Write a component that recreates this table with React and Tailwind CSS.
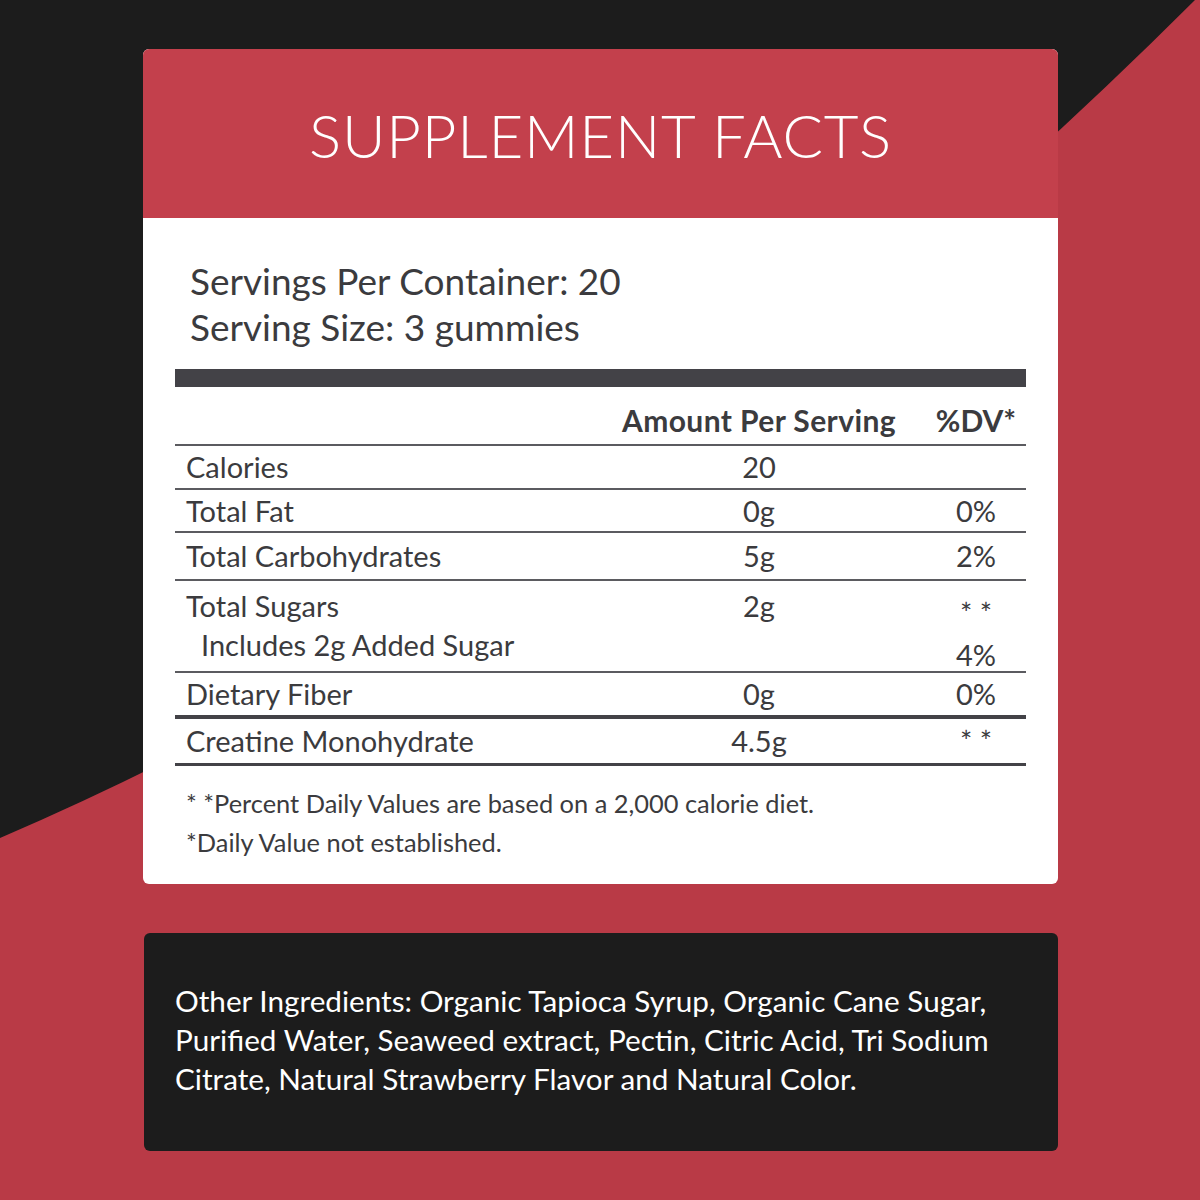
import React from "react";

const rows = [
  { label: "Calories", amt: "20", dv: "", h: "h-[42px]", border: "border-b-2 border-[#5b5b60]" },
  { label: "Total Fat", amt: "0g", dv: "0%", h: "h-[41px]", border: "border-b-2 border-[#5b5b60]" },
  { label: "Total Carbohydrates", amt: "5g", dv: "2%", h: "h-[46px]", border: "border-b-2 border-[#5b5b60]" },
];

export default function App() {
  return (
    <div
      className="relative w-[1200px] h-[1200px] overflow-hidden bg-[#1c1c1c] text-[#3b3b3e]"
      style={{ fontFamily: "Lato, 'Open Sans', sans-serif" }}
    >
      <svg className="absolute inset-0" width="1200" height="1200" viewBox="0 0 1200 1200">
        <path d="M0 838 Q626 569 1200 -5 L1200 1200 L0 1200 Z" fill="#b93a46" />
      </svg>

      <div className="relative flex flex-col pt-[49px] pl-[143px]">
        {/* Card */}
        <div className="w-[915px] bg-white rounded-[6px] overflow-hidden">
          <div className="h-[169px] bg-[#c3404c] flex items-center justify-center">
            <h1 className="text-white text-[60px] font-light leading-none tracking-[0.8px] pt-[2px]">SUPPLEMENT FACTS</h1>
          </div>

          <div className="px-[32px] pt-[40px] pb-[22px]">
            <div className="pl-[15px] text-[37px] leading-[46px] text-[#3b3b3e]">
              <div>Servings Per Container: 20</div>
              <div>Serving Size: 3 gummies</div>
            </div>

            <div className="mt-[19px] h-[18px] bg-[#434247]" />

            {/* header */}
            <div className="h-[59px] pt-[9px] flex items-center border-b-2 border-[#5b5b60] text-[30px] font-bold">
              <div className="flex-1" />
              <div className="w-[276px] text-center tracking-[0.4px]">Amount Per Serving</div>
              <div className="ml-[29px] w-[100px] text-center">%DV*</div>
            </div>

            <div className="text-[29px]">
              {rows.map((r) => (
                <div key={r.label} className={`${r.h} box-content flex items-center ${r.border}`}>
                  <div className="flex-1 pl-[11px]">{r.label}</div>
                  <div className="w-[276px] text-center">{r.amt}</div>
                  <div className="ml-[29px] w-[100px] text-center">{r.dv}</div>
                </div>
              ))}

              <div className="h-[90px] box-content flex border-b-2 border-[#5b5b60]">
                <div className="flex-1 pl-[11px] flex flex-col">
                  <div className="h-[50px] flex items-center">Total Sugars</div>
                  <div className="pl-[15px] h-[28px] flex items-center">Includes 2g Added Sugar</div>
                </div>
                <div className="w-[276px] text-center h-[50px] flex items-center justify-center">2g</div>
                <div className="ml-[29px] w-[100px] flex flex-col items-center">
                  <div className="h-[52px] pt-[12px] flex items-center">* *</div>
                  <div className="h-[44px] flex items-center">4%</div>
                </div>
              </div>

              <div className="h-[42px] box-content flex items-center border-b-4 border-[#434247]">
                <div className="flex-1 pl-[11px]">Dietary Fiber</div>
                <div className="w-[276px] text-center">0g</div>
                <div className="ml-[29px] w-[100px] text-center">0%</div>
              </div>

              <div className="h-[44px] box-content flex items-center border-b-[3px] border-[#434247]">
                <div className="flex-1 pl-[11px]">Creatine Monohydrate</div>
                <div className="w-[276px] text-center">4.5g</div>
                <div className="ml-[29px] w-[100px] text-center">* *</div>
              </div>
            </div>

            <div className="mt-[18px] pl-[11px] text-[25.4px] leading-[39px]">
              <div>* *Percent Daily Values are based on a 2,000 calorie diet.</div>
              <div>*Daily Value not established.</div>
            </div>
          </div>
        </div>

        {/* Ingredients */}
        <div className="mt-[49px] w-[914px] ml-px h-[218px] bg-[#1c1c1c] rounded-[6px] flex items-center pl-[31px] pb-[6px]">
          <p className="text-white text-[29.7px] leading-[39px]">
            Other Ingredients: Organic Tapioca Syrup, Organic Cane Sugar,
            <br />
            Purified Water, Seaweed extract, Pectin, Citric Acid, Tri Sodium
            <br />
            Citrate, Natural Strawberry Flavor and Natural Color.
          </p>
        </div>
      </div>
    </div>
  );
}
